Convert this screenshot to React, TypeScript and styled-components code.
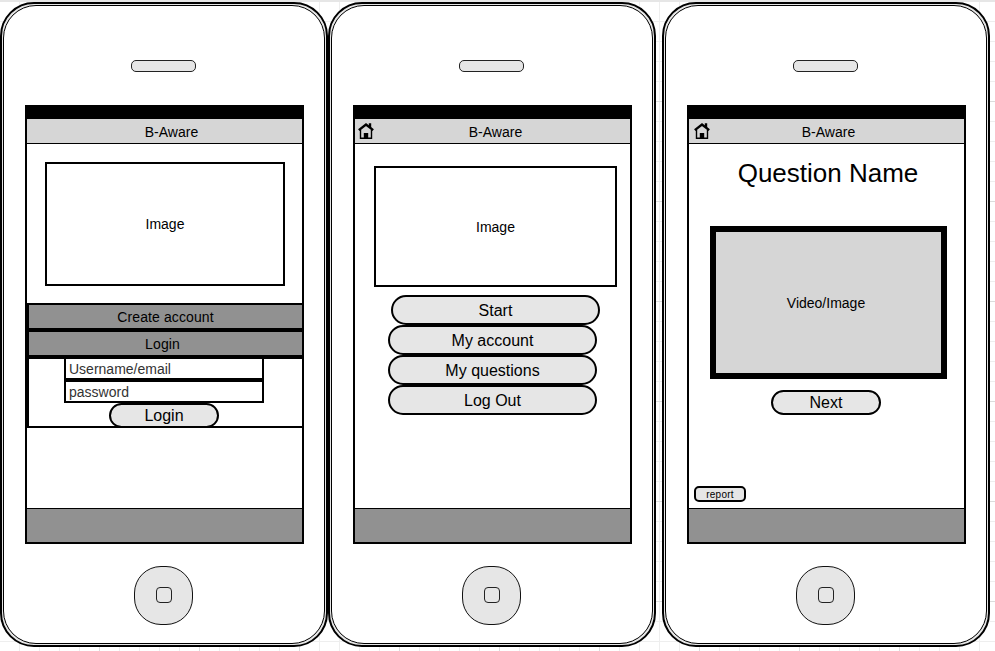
import React from "react";
import styled, { createGlobalStyle } from "styled-components";

const GlobalStyle = createGlobalStyle`
  *, *::before, *::after { box-sizing: border-box; }
  body { margin: 0; background: #fff; font-family: "Liberation Sans", Arial, sans-serif; color: #000; overflow: hidden; }
  button, input { font-family: inherit; color: inherit; margin: 0; }
`;

const Canvas = styled.main`
  display: flex;
  align-items: flex-start;
  width: 995px;
  height: 651px;
  border-top: 2px solid #e6e6e6;
  background-color: #fff;
  background-image:
    linear-gradient(to right, #dcdcdc 1px, transparent 1px),
    linear-gradient(to bottom, #dcdcdc 1px, transparent 1px),
    linear-gradient(to right, #eeeeee 1px, transparent 1px),
    linear-gradient(to bottom, #eeeeee 1px, transparent 1px);
  background-size: 100px 100px, 100px 100px, 20px 20px, 20px 20px;
  background-position: 99px 99px, 99px 99px, 19px 19px, 19px 19px;
`;

const Shell = styled.section<{ $gap?: number }>`
  flex: none;
  width: 328px;
  height: 645px;
  margin-left: ${(p) => p.$gap ?? 0}px;
  padding: 1px;
  border: 2px solid #000;
  border-radius: 34px;
  background: #e6e6e6;
`;

const Face = styled.div`
  display: flex;
  flex-direction: column;
  align-items: center;
  height: 100%;
  padding-top: 54px;
  border: 1px solid #000;
  border-radius: 33px;
  background: #fff;
`;

const Speaker = styled.div`
  width: 65px;
  height: 12px;
  margin-right: 1px;
  border: 1px solid #222;
  border-radius: 5px;
  background: #e6e6e6;
`;

const Screen = styled.div`
  display: flex;
  flex-direction: column;
  width: 279px;
  height: 439px;
  margin: 33px 0 22px 1px;
  border: 2px solid #000;
  border-top-width: 14px;
  background: #fff;
`;

const Header = styled.header<{ $shift: number; $iconGap: number }>`
  display: grid;
  grid-template-columns: 20px 1fr 20px;
  align-items: center;
  height: 25px;
  border-bottom: 1px solid #000;
  background: #d6d6d6;

  svg { display: block; margin: 0 0 1px ${(p) => p.$iconGap}px; }
  h1 {
    grid-column: 2;
    margin: 2px 0 0 ${(p) => p.$shift}px;
    font-size: 14px;
    line-height: 16px;
    font-weight: 400;
    text-align: center;
  }
`;

const Content = styled.div<{ $top: number }>`
  flex: 1;
  display: flex;
  flex-direction: column;
  align-items: flex-start;
  min-height: 0;
  padding-top: ${(p) => p.$top}px;
`;

const Footer = styled.footer`
  height: 34px;
  border-top: 1px solid #000;
  background: #919191;
`;

const HomeButton = styled.div`
  display: grid;
  place-items: center;
  width: 59px;
  height: 59px;
  padding: 0 0 1px 1px;
  margin-right: 1px;
  border: 1px solid #111;
  border-radius: 27px;
  background: #e6e6e6;

  &::after {
    content: "";
    width: 16px;
    height: 16px;
    border: 1px solid #222;
    border-radius: 4px;
  }
`;

const MediaBox = styled.div<{ $w: number; $h: number; $left: number; $video?: boolean }>`
  display: flex;
  align-items: center;
  justify-content: center;
  flex: none;
  width: ${(p) => p.$w}px;
  height: ${(p) => p.$h}px;
  margin-left: ${(p) => p.$left}px;
  padding-right: ${(p) => (p.$video ? 5 : 0)}px;
  border: ${(p) => (p.$video ? 6 : 2)}px solid #000;
  background: ${(p) => (p.$video ? "#d6d6d6" : "#fff")};
  font-size: 14px;
  line-height: 16px;
`;

const Accordion = styled.div`
  width: 277px;
  margin: 17px -2px 0 0;
`;

const AccordionBar = styled.button<{ $nudge: number }>`
  display: block;
  width: 100%;
  height: 27px;
  padding: 1px ${(p) => p.$nudge}px 0 0;
  border: 2px solid #000;
  background: #919191;
  font-size: 14px;
  letter-spacing: 0.1px;
  text-align: center;
`;

const LoginForm = styled.div`
  display: flex;
  flex-direction: column;
  height: 71px;
  padding-left: 35px;
  border: 2px solid #000;
`;

const Field = styled.div`
  flex: none;
  width: 200px;
  height: 23px;
  padding: 2px 3px 0;
  border: 2px solid #000;
  background: #fff;
  color: #333;
  font-size: 14px;
  line-height: 17px;

  &:first-child { margin-top: -2px; }
`;

const Pill = styled.button<{ $w: number; $h: number; $left: number; $top?: number }>`
  flex: none;
  width: ${(p) => p.$w}px;
  height: ${(p) => p.$h}px;
  margin: ${(p) => p.$top ?? 0}px 0 0 ${(p) => p.$left}px;
  padding: ${(p) => (p.$h > 25 ? 1 : 0)}px 0 0;
  border: 2px solid #000;
  border-radius: 15px;
  background: #e6e6e6;
  font-size: 16px;
  line-height: 18px;
`;

const QuestionTitle = styled.h2`
  width: 100%;
  margin: 0 0 38px;
  padding-left: 3px;
  font-size: 26px;
  line-height: 30px;
  font-weight: 400;
  text-align: center;
`;

const ReportButton = styled.button`
  width: 52px;
  height: 16px;
  margin: auto 0 6px 5px;
  padding: 1px 0 0;
  border: 2px solid #000;
  border-radius: 5px;
  background: #e6e6e6;
  font-size: 10px;
  line-height: 11px;
  letter-spacing: 0.25px;
`;

const HomeIcon = () => (
  <svg width="16" height="16" viewBox="0 0 16 16" aria-label="Home">
    <path d="M2.5 6.5V15.3H13.5V6.5" fill="none" stroke="#000" strokeWidth="1.4" />
    <path d="M10.8 0.2H13.2V6L10.8 4Z" fill="#000" />
    <path d="M0.8 7.2L8 1.5L15.2 7.2" fill="none" stroke="#000" strokeWidth="2.3" />
    <path d="M5.8 10H10.2V16H5.8Z" fill="#000" />
  </svg>
);

interface PhoneProps {
  gap?: number;
  top: number;
  titleShift: number;
  iconGap?: number;
  children: React.ReactNode;
}

const Phone = ({ gap, top, titleShift, iconGap, children }: PhoneProps) => (
  <Shell $gap={gap}>
    <Face>
      <Speaker />
      <Screen>
        <Header $shift={titleShift} $iconGap={iconGap ?? 0}>
          {iconGap !== undefined && <HomeIcon />}
          <h1>B-Aware</h1>
        </Header>
        <Content $top={top}>{children}</Content>
        <Footer />
      </Screen>
      <HomeButton />
    </Face>
  </Shell>
);

const menuItems = ["My account", "My questions", "Log Out"];

export default function App() {
  return (
    <>
      <GlobalStyle />
      <Canvas>
        <Phone top={18} titleShift={14}>
          <MediaBox $w={240} $h={124} $left={18}>Image</MediaBox>
          <Accordion>
            <AccordionBar $nudge={0}>Create account</AccordionBar>
            <AccordionBar $nudge={6}>Login</AccordionBar>
            <LoginForm>
              <Field>Username/email</Field>
              <Field>password</Field>
              <Pill $w={110} $h={25} $left={45}>Login</Pill>
            </LoginForm>
          </Accordion>
        </Phone>
        <Phone top={22} titleShift={6} iconGap={3}>
          <MediaBox $w={243} $h={121} $left={19}>Image</MediaBox>
          <Pill $w={209} $h={30} $left={36} $top={8}>Start</Pill>
          {menuItems.map((item) => (
            <Pill key={item} $w={209} $h={30} $left={33}>{item}</Pill>
          ))}
        </Phone>
        <Phone gap={6} top={14} titleShift={4} iconGap={5}>
          <QuestionTitle>Question Name</QuestionTitle>
          <MediaBox $w={237} $h={153} $left={21} $video>Video/Image</MediaBox>
          <Pill $w={110} $h={25} $left={82} $top={11}>Next</Pill>
          <ReportButton>report</ReportButton>
        </Phone>
      </Canvas>
    </>
  );
}
